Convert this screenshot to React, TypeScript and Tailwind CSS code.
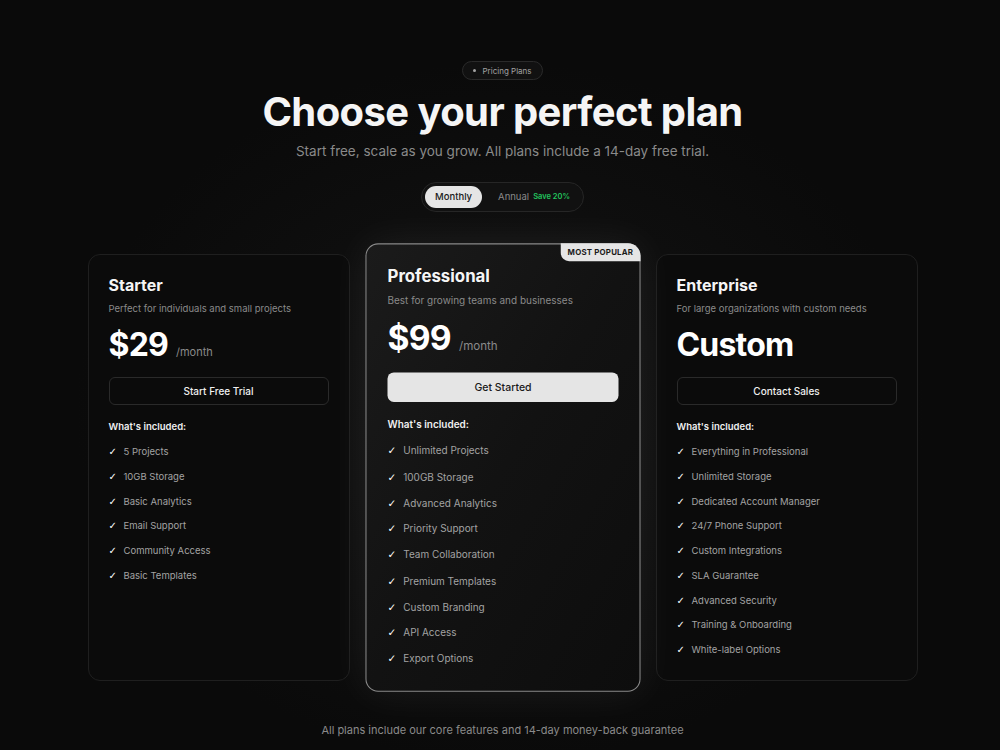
import React, { useState } from 'react';

type Plan = {
  name: string;
  blurb: string;
  price: string;
  period?: string;
  cta: string;
  popular?: boolean;
  features: string[];
};

const plans: Plan[] = [
  {
    name: 'Starter',
    blurb: 'Perfect for individuals and small projects',
    price: '$29',
    period: '/month',
    cta: 'Start Free Trial',
    features: ['5 Projects', '10GB Storage', 'Basic Analytics', 'Email Support', 'Community Access', 'Basic Templates'],
  },
  {
    name: 'Professional',
    blurb: 'Best for growing teams and businesses',
    price: '$99',
    period: '/month',
    cta: 'Get Started',
    popular: true,
    features: [
      'Unlimited Projects',
      '100GB Storage',
      'Advanced Analytics',
      'Priority Support',
      'Team Collaboration',
      'Premium Templates',
      'Custom Branding',
      'API Access',
      'Export Options',
    ],
  },
  {
    name: 'Enterprise',
    blurb: 'For large organizations with custom needs',
    price: 'Custom',
    cta: 'Contact Sales',
    features: [
      'Everything in Professional',
      'Unlimited Storage',
      'Dedicated Account Manager',
      '24/7 Phone Support',
      'Custom Integrations',
      'SLA Guarantee',
      'Advanced Security',
      'Training & Onboarding',
      'White-label Options',
    ],
  },
];

const PlanCard: React.FC<{ plan: Plan }> = ({ plan }) => (
  <div
    className={
      plan.popular
        ? 'relative w-[262px] rounded-xl border border-[#8a8a8a] bg-gradient-to-br from-[#1b1b1b] via-[#121212] to-[#0d0d0d] px-5 pt-[18px] pb-[23px] scale-105 shadow-[0_0_40px_rgba(255,255,255,0.07)] z-10'
        : 'relative w-[262px] rounded-xl border border-[#1f1f1f] bg-[#0b0b0b] px-5 pt-[18px] pb-[23px]'
    }
  >
    {plan.popular && (
      <div className="absolute -top-px -right-px rounded-bl-lg rounded-tr-xl bg-[#e5e5e5] px-[7px] py-[3px] text-[7.5px] font-bold tracking-wide text-[#1a1a1a]">
        MOST POPULAR
      </div>
    )}
    <h3 className="text-[16px] font-bold leading-6 text-[#f5f5f5]">{plan.name}</h3>
    <p className="mt-1 text-[9.5px] leading-4 text-[#8a8a8a]">{plan.blurb}</p>
    <div className="mt-2 flex items-baseline gap-2">
      <span className="text-[32px] font-bold leading-10 tracking-tight text-white">{plan.price}</span>
      {plan.period && <span className="text-[11px] text-[#8a8a8a]">{plan.period}</span>}
    </div>
    <button
      className={
        plan.popular
          ? 'mt-3 h-7 w-full rounded-md bg-[#e5e5e5] text-[10px] font-medium text-[#1a1a1a]'
          : 'mt-3 h-7 w-full rounded-md border border-[#2a2a2a] text-[10px] font-medium text-[#f0f0f0]'
      }
    >
      {plan.cta}
    </button>
    <p className="mt-4 text-[9.5px] font-semibold leading-3 text-[#f0f0f0]">What's included:</p>
    <ul className="mt-[12px] flex flex-col gap-[10.75px]">
      {plan.features.map((f) => (
        <li key={f} className="flex items-center gap-[8px] text-[9.5px] leading-[14px] text-[#a3a3a3]">
          <span className="w-[7px] text-[10px] text-white" style={{ fontFamily: '"DejaVu Sans", sans-serif' }}>
            ✓
          </span>
          {f}
        </li>
      ))}
    </ul>
  </div>
);

export default function App() {
  const [billing, setBilling] = useState<'monthly' | 'annual'>('monthly');

  return (
    <div
      className="min-h-[750px] w-full bg-[#0a0a0a] bg-[radial-gradient(ellipse_at_50%_55%,#141414_0%,#0a0a0a_60%)] pl-[5px] pt-[61px] text-white"
      style={{ fontFamily: 'Inter, "Noto Sans", sans-serif' }}
    >
      <div className="flex flex-col items-center">
        {/* Header */}
        <div className="flex h-[19px] items-center gap-[6px] rounded-full border border-[#2a2a2a] bg-[#111111] px-[10px] text-[8px] text-[#a3a3a3]">
          <span className="h-[3px] w-[3px] rounded-full bg-[#a3a3a3]" />
          Pricing Plans
        </div>
        <h1 className="mt-[10px] text-[40px] font-bold leading-[44px] tracking-[-0.015em] text-[#f5f5f5]">
          Choose your perfect plan
        </h1>
        <p className="mt-[7px] text-[13.5px] leading-5 text-[#8a8a8a]">
          Start free, scale as you grow. All plans include a 14-day free trial.
        </p>

        {/* Billing toggle */}
        <div className="mt-[21px] flex h-[30px] items-center rounded-full border border-[#262626] bg-[#111111] p-[3px] text-[9.5px]">
          <button
            onClick={() => setBilling('monthly')}
            className={
              billing === 'monthly'
                ? 'h-full rounded-full bg-[#e5e5e5] px-[10px] font-medium text-[#1a1a1a]'
                : 'h-full rounded-full px-[10px] text-[#8a8a8a]'
            }
          >
            Monthly
          </button>
          <button
            onClick={() => setBilling('annual')}
            className={
              billing === 'annual'
                ? 'ml-[6px] flex h-full items-center gap-1 rounded-full bg-[#e5e5e5] px-[10px] text-[#1a1a1a]'
                : 'ml-[6px] flex h-full items-center gap-1 rounded-full px-[10px] text-[#8a8a8a]'
            }
          >
            Annual <span className="text-[7.5px] font-semibold text-[#22c55e]">Save 20%</span>
          </button>
        </div>

        {/* Plans */}
        <div className="mt-[42px] flex items-stretch gap-[22px]">
          {plans.map((p) => (
            <PlanCard key={p.name} plan={p} />
          ))}
        </div>

        <p className="mt-[41px] text-[11px] text-[#8a8a8a]">
          All plans include our core features and 14-day money-back guarantee
        </p>
      </div>
    </div>
  );
}
